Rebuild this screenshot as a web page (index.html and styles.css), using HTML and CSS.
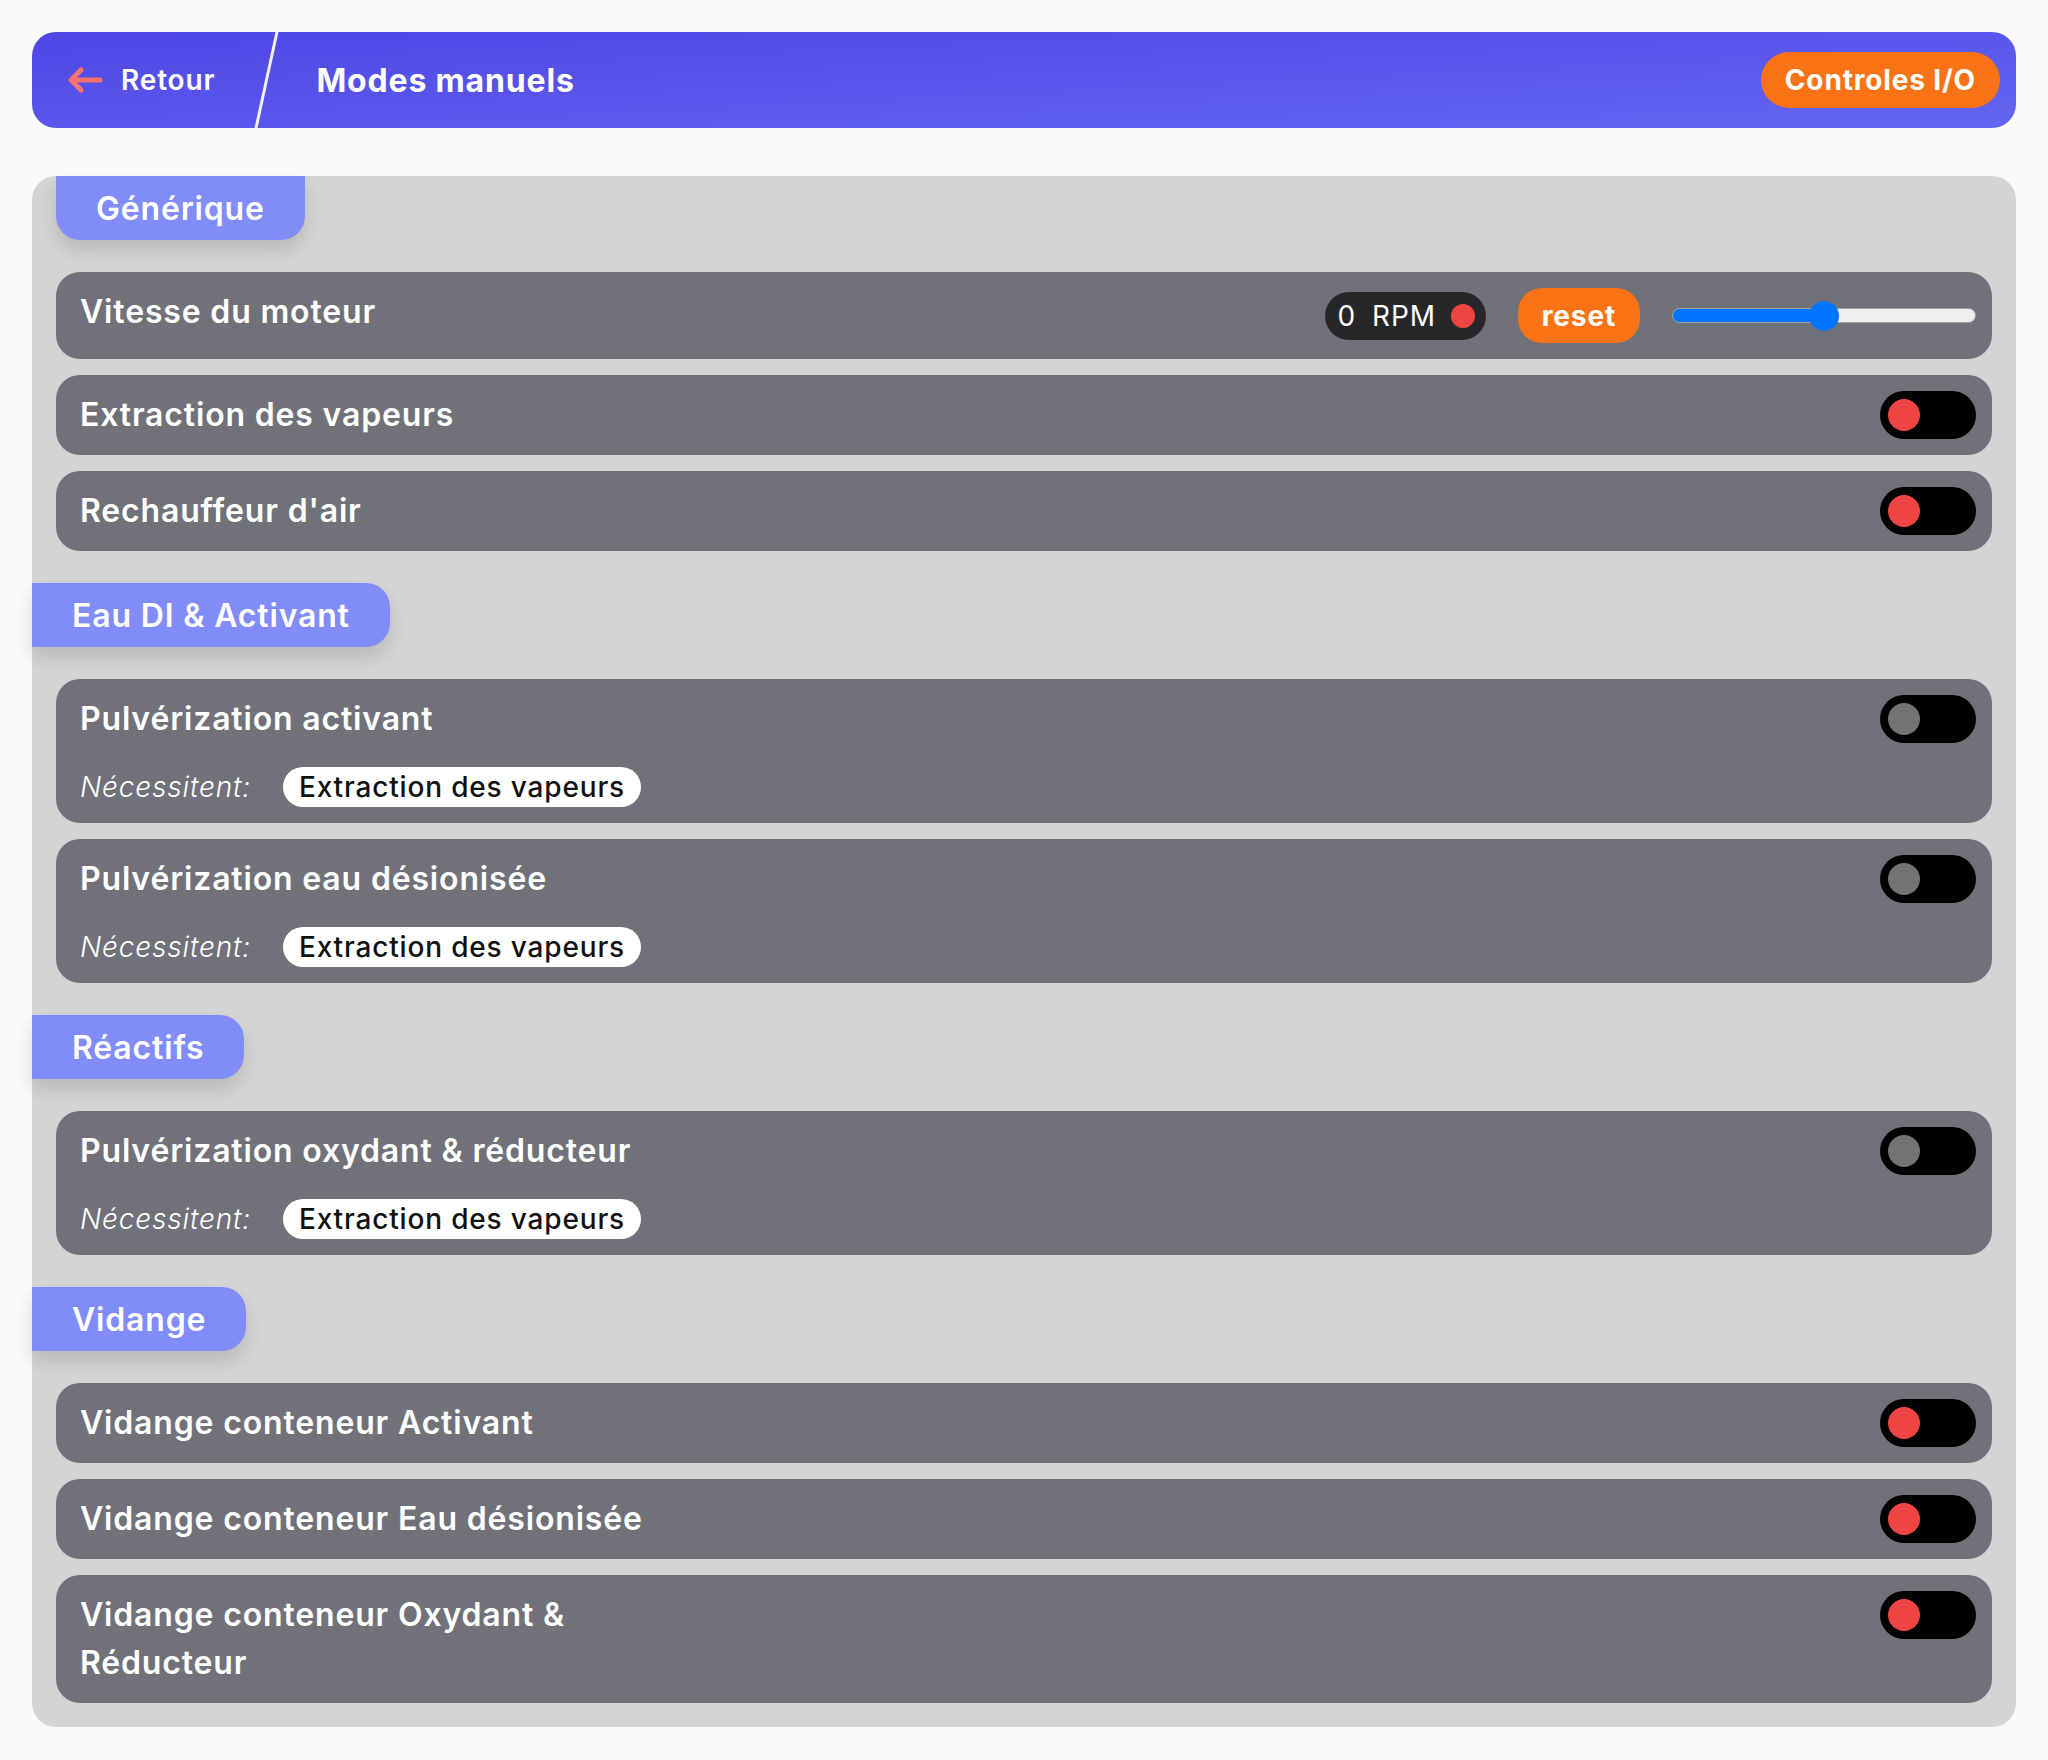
FILE: index.html
```html
<!DOCTYPE html>
<html lang="fr">
<head>
<meta charset="utf-8">
<title>Modes manuels</title>
<link rel="stylesheet" href="styles.css">
</head>
<body>
<header class="topbar">
  <a class="back" href="#">
    <svg class="back-icon" viewBox="0 0 36 26" width="36" height="26" aria-hidden="true">
      <path d="M33 13H4M14 3L4 13l10 10" fill="none" stroke="#f87171" stroke-width="5" stroke-linecap="round" stroke-linejoin="round"/>
    </svg>
    <span>Retour</span>
  </a>
  <span class="sep"></span>
  <h1 class="page-title">Modes manuels</h1>
  <button class="io-btn">Controles I/O</button>
</header>

<main class="panel">
  <section class="group">
    <div class="tab tab-top">Générique</div>
    <div class="rows">
      <div class="row row-motor">
        <div class="row-title">Vitesse du moteur</div>
        <div class="controls">
          <div class="rpm"><span>0</span><span class="rpm-unit">RPM</span><span class="dot"></span></div>
          <button class="reset">reset</button>
          <div class="range"><div class="range-thumb"></div></div>
        </div>
      </div>
      <div class="row">
        <div class="row-title">Extraction des vapeurs</div>
        <div class="toggle"><span class="knob knob-red"></span></div>
      </div>
      <div class="row">
        <div class="row-title">Rechauffeur d'air</div>
        <div class="toggle"><span class="knob knob-red"></span></div>
      </div>
    </div>
  </section>

  <section class="group">
    <div class="tab tab-side">Eau DI &amp; Activant</div>
    <div class="rows">
      <div class="row">
        <div class="row-main">
          <div class="row-title">Pulvérization activant</div>
          <div class="needs"><span class="needs-label">Nécessitent:</span><span class="chip">Extraction des vapeurs</span></div>
        </div>
        <div class="toggle"><span class="knob knob-grey"></span></div>
      </div>
      <div class="row">
        <div class="row-main">
          <div class="row-title">Pulvérization eau désionisée</div>
          <div class="needs"><span class="needs-label">Nécessitent:</span><span class="chip">Extraction des vapeurs</span></div>
        </div>
        <div class="toggle"><span class="knob knob-grey"></span></div>
      </div>
    </div>
  </section>

  <section class="group">
    <div class="tab tab-side">Réactifs</div>
    <div class="rows">
      <div class="row">
        <div class="row-main">
          <div class="row-title">Pulvérization oxydant &amp; réducteur</div>
          <div class="needs"><span class="needs-label">Nécessitent:</span><span class="chip">Extraction des vapeurs</span></div>
        </div>
        <div class="toggle"><span class="knob knob-grey"></span></div>
      </div>
    </div>
  </section>

  <section class="group">
    <div class="tab tab-side">Vidange</div>
    <div class="rows">
      <div class="row">
        <div class="row-title">Vidange conteneur Activant</div>
        <div class="toggle"><span class="knob knob-red"></span></div>
      </div>
      <div class="row">
        <div class="row-title">Vidange conteneur Eau désionisée</div>
        <div class="toggle"><span class="knob knob-red"></span></div>
      </div>
      <div class="row">
        <div class="row-title">Vidange conteneur Oxydant &amp; Réducteur</div>
        <div class="toggle"><span class="knob knob-red"></span></div>
      </div>
    </div>
  </section>
</main>
</body>
</html>
```
FILE: styles.css
```css
* { box-sizing: border-box; }

body {
  margin: 0;
  padding: 32px;
  background: #fafafa;
  font-family: Inter, "Open Sans", "Liberation Sans", sans-serif;
  letter-spacing: 0.052em;
  color: #fff;
}

/* ---------- top bar ---------- */
.topbar {
  display: flex;
  align-items: center;
  height: 96px;
  padding: 0 16px 0 35px;
  border-radius: 24px;
  background: linear-gradient(to bottom right, #4f46e5, #6366f1);
}

.back {
  display: flex;
  align-items: center;
  gap: 18px;
  color: #fff;
  text-decoration: none;
  font-size: 28px;
  font-weight: 600;
}

.back-icon { display: block; }

.sep {
  width: 3px;
  height: 96px;
  margin: 0 48px 0 50px;
  background: rgba(255, 255, 255, 0.92);
  transform: skewX(-12.3deg);
}

.page-title {
  margin: 0;
  flex: 1;
  font-size: 32px;
  font-weight: 700;
}

.io-btn {
  height: 56px;
  padding: 0 24px;
  border: 0;
  border-radius: 28px;
  background: #f97316;
  color: #fff;
  font-family: inherit;
  letter-spacing: inherit;
  font-size: 28px;
  font-weight: 700;
}

/* ---------- panel ---------- */
.panel {
  margin-top: 48px;
  padding: 0 24px 24px;
  border-radius: 24px;
  background: #d4d4d4;
}

.group + .group { margin-top: 32px; }

.tab {
  display: inline-flex;
  align-items: center;
  height: 64px;
  padding: 0 40px;
  background: #818cf8;
  color: #fff;
  font-size: 32px;
  font-weight: 600;
  box-shadow: 0 10px 18px rgba(0, 0, 0, 0.13);
}

.tab-top {
  border-radius: 0 0 24px 24px;
}

.tab-side {
  margin-left: -24px;
  border-radius: 0 24px 24px 0;
}

.rows {
  display: flex;
  flex-direction: column;
  gap: 16px;
  margin-top: 32px;
}

.row {
  display: flex;
  align-items: flex-start;
  justify-content: space-between;
  padding: 16px 16px 16px 24px;
  border-radius: 24px;
  background: #71717a;
}

.row-title {
  max-width: 610px;
  font-size: 32px;
  line-height: 48px;
  font-weight: 600;
}

.needs {
  display: flex;
  align-items: center;
  gap: 32px;
  margin-top: 24px;
}

.needs-label {
  font-size: 28px;
  font-style: italic;
  font-weight: 300;
}

.chip {
  display: inline-flex;
  align-items: center;
  height: 40px;
  padding: 0 16px;
  border-radius: 20px;
  background: #fff;
  color: #111;
  font-size: 28px;
  font-weight: 500;
}

/* ---------- toggle ---------- */
.toggle {
  display: flex;
  align-items: center;
  width: 96px;
  height: 48px;
  padding: 0 8px;
  border-radius: 24px;
  background: #000;
  flex-shrink: 0;
}

.knob {
  width: 32px;
  height: 32px;
  border-radius: 50%;
}

.knob-red { background: #ef4444; }
.knob-grey { background: #737373; }

/* ---------- motor controls ---------- */
.controls {
  display: flex;
  align-items: center;
  gap: 32px;
  height: 55px;
}

.rpm {
  display: flex;
  align-items: center;
  height: 48px;
  padding: 0 11px 0 13px;
  border-radius: 24px;
  background: #27272a;
  font-size: 28px;
  font-weight: 400;
}

.rpm-unit { margin-left: 16px; }

.dot {
  width: 24px;
  height: 24px;
  margin-left: 15px;
  border-radius: 50%;
  background: #ef4444;
}

.reset {
  height: 55px;
  padding: 0 24px;
  border: 0;
  border-radius: 24px;
  background: #f97316;
  color: #fff;
  font-family: inherit;
  letter-spacing: inherit;
  font-size: 28px;
  font-weight: 700;
}

.range {
  position: relative;
  width: 304px;
  height: 15px;
  border: 1px solid #a3a3a3;
  border-radius: 8px;
  background: linear-gradient(to right, #0075ff 50%, #efefef 50%);
}

.range-thumb {
  position: absolute;
  left: calc(50% - 15px);
  top: 50%;
  width: 30px;
  height: 30px;
  margin-top: -15px;
  border-radius: 50%;
  background: #0075ff;
}
```
